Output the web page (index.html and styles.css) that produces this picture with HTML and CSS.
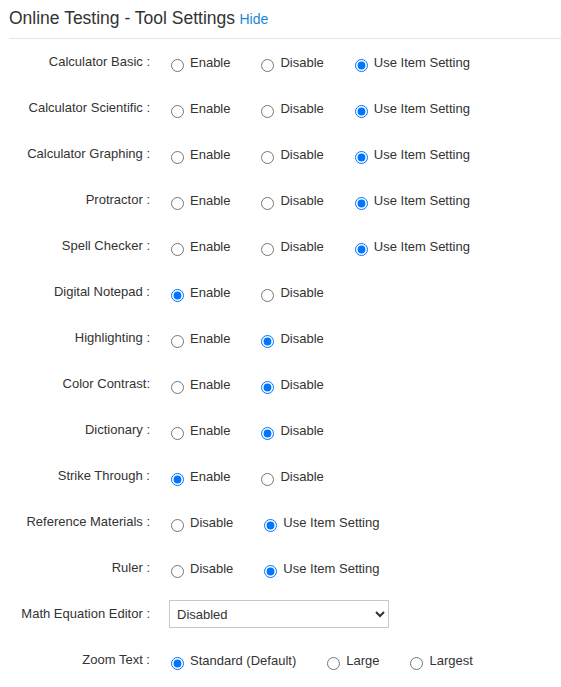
FILE: index.html
```html
<!DOCTYPE html>
<html>
<head>
<meta charset="utf-8">
<link rel="stylesheet" href="styles.css">
</head>
<body>
<div class="panel">
  <div class="header">
    <span class="title">Online Testing - Tool Settings</span>
    <a class="hide" href="#">Hide</a>
  </div>
  <div class="rows">
    <div class="row">
      <div class="label">Calculator Basic :</div>
      <div class="opts">
        <label class="opt"><input type="radio" name="r1">Enable</label>
        <label class="opt"><input type="radio" name="r1">Disable</label>
        <label class="opt"><input type="radio" name="r1" checked>Use Item Setting</label>
      </div>
    </div>
    <div class="row">
      <div class="label">Calculator Scientific :</div>
      <div class="opts">
        <label class="opt"><input type="radio" name="r2">Enable</label>
        <label class="opt"><input type="radio" name="r2">Disable</label>
        <label class="opt"><input type="radio" name="r2" checked>Use Item Setting</label>
      </div>
    </div>
    <div class="row">
      <div class="label">Calculator Graphing :</div>
      <div class="opts">
        <label class="opt"><input type="radio" name="r3">Enable</label>
        <label class="opt"><input type="radio" name="r3">Disable</label>
        <label class="opt"><input type="radio" name="r3" checked>Use Item Setting</label>
      </div>
    </div>
    <div class="row">
      <div class="label">Protractor :</div>
      <div class="opts">
        <label class="opt"><input type="radio" name="r4">Enable</label>
        <label class="opt"><input type="radio" name="r4">Disable</label>
        <label class="opt"><input type="radio" name="r4" checked>Use Item Setting</label>
      </div>
    </div>
    <div class="row">
      <div class="label">Spell Checker :</div>
      <div class="opts">
        <label class="opt"><input type="radio" name="r5">Enable</label>
        <label class="opt"><input type="radio" name="r5">Disable</label>
        <label class="opt"><input type="radio" name="r5" checked>Use Item Setting</label>
      </div>
    </div>
    <div class="row">
      <div class="label">Digital Notepad :</div>
      <div class="opts">
        <label class="opt"><input type="radio" name="r6" checked>Enable</label>
        <label class="opt"><input type="radio" name="r6">Disable</label>
      </div>
    </div>
    <div class="row">
      <div class="label">Highlighting :</div>
      <div class="opts">
        <label class="opt"><input type="radio" name="r7">Enable</label>
        <label class="opt"><input type="radio" name="r7" checked>Disable</label>
      </div>
    </div>
    <div class="row">
      <div class="label">Color Contrast:</div>
      <div class="opts">
        <label class="opt"><input type="radio" name="r8">Enable</label>
        <label class="opt"><input type="radio" name="r8" checked>Disable</label>
      </div>
    </div>
    <div class="row">
      <div class="label">Dictionary :</div>
      <div class="opts">
        <label class="opt"><input type="radio" name="r9">Enable</label>
        <label class="opt"><input type="radio" name="r9" checked>Disable</label>
      </div>
    </div>
    <div class="row">
      <div class="label">Strike Through :</div>
      <div class="opts">
        <label class="opt"><input type="radio" name="r10" checked>Enable</label>
        <label class="opt"><input type="radio" name="r10">Disable</label>
      </div>
    </div>
    <div class="row">
      <div class="label">Reference Materials :</div>
      <div class="opts">
        <label class="opt"><input type="radio" name="r11">Disable</label>
        <label class="opt"><input type="radio" name="r11" checked>Use Item Setting</label>
      </div>
    </div>
    <div class="row">
      <div class="label">Ruler :</div>
      <div class="opts">
        <label class="opt"><input type="radio" name="r12">Disable</label>
        <label class="opt"><input type="radio" name="r12" checked>Use Item Setting</label>
      </div>
    </div>
    <div class="row">
      <div class="label">Math Equation Editor :</div>
      <div class="opts">
        <select class="sel">
          <option>Disabled</option>
          <option>Enabled</option>
        </select>
      </div>
    </div>
    <div class="row">
      <div class="label">Zoom Text :</div>
      <div class="opts">
        <label class="opt"><input type="radio" name="r14" checked>Standard (Default)</label>
        <label class="opt"><input type="radio" name="r14">Large</label>
        <label class="opt"><input type="radio" name="r14">Largest</label>
      </div>
    </div>
  </div>
</div>
</body>
</html>
```
FILE: styles.css
```css
html, body {
  margin: 0;
  padding: 0;
  background: #fff;
}
body {
  font-family: "Liberation Sans", Arial, sans-serif;
  color: #333;
}
.panel {
  margin-left: 9px;
}
.header {
  padding: 8px 0 9px 0;
  line-height: 20px;
  border-bottom: 1px solid #e5e5e5;
}
.title {
  font-size: 17.5px;
  color: #333;
}
.hide {
  font-size: 14px;
  color: #1a87d4;
  text-decoration: none;
}
.rows {
  display: flex;
  flex-direction: column;
}
.row {
  box-sizing: border-box;
  height: 46px;
  padding-top: 15px;
  display: grid;
  grid-template-columns: 141px 1fr;
  column-gap: 21px;
  align-items: start;
  font-size: 13px;
}
.label {
  text-align: right;
  line-height: 15px;
}
.opts {
  display: flex;
  align-items: flex-start;
  gap: 31px;
  padding-top: 1px;
  line-height: 15px;
}
.opt {
  display: flex;
  align-items: flex-start;
  color: #333;
}
.opt input {
  width: 13px;
  height: 13px;
  margin: 4px 6px 0 0;
  flex: none;
}
.sel {
  box-sizing: border-box;
  width: 220px;
  height: 28px;
  margin: -7px 0 0 -2px;
  padding: 0 3px;
  border: 1px solid #c8c8c8;
  border-radius: 0;
  background: #fff;
  font-family: "Liberation Sans", Arial, sans-serif;
  font-size: 13px;
  color: #333;
}
```
